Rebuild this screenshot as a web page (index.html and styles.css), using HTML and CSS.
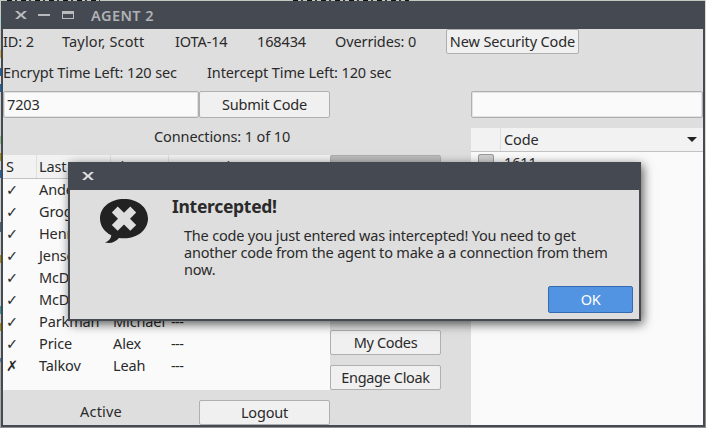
FILE: index.html
```
<!DOCTYPE html>
<html lang="en">
<head>
<meta charset="utf-8">
<title>AGENT 2</title>
<link rel="stylesheet" href="styles.css">
</head>
<body>
<div class="desktop">
  <div class="window">
    <header class="titlebar">
      <svg class="controls" width="64" height="12" viewBox="0 0 64 12">
        <path d="M1 2h3l3 2.7L10 2h3L8.700 6 13 10h-3L7 7.300 4 10H1l4.300-4z" fill="#b8babd"/>
        <path d="M24 5h12v2H24z" fill="#b8babd"/>
        <path d="M48 2h12v8H48zm1 3v4h10V5z" fill="#b8babd" fill-rule="evenodd"/>
      </svg>
      <span class="window-name">AGENT 2</span>
    </header>
    <main class="content">
      <div class="agent-row">
        <span class="id">ID: 2</span><span class="name">Taylor, Scott</span><span class="sector">IOTA-14</span><span class="serial">168434</span><span class="overrides">Overrides: 0</span><button class="btn new-code">New Security Code</button>
      </div>
      <div class="timers"><span class="encrypt">Encrypt Time Left: 120 sec</span><span class="intercept">Intercept Time Left: 120 sec</span></div>
      <div class="panels">
        <section class="left">
          <div class="entry-row"><div class="field">7203</div><button class="btn submit">Submit Code</button></div>
          <div class="connections"><span>Connections: 1 of 10</span></div>
          <div class="middle">
            <div class="agents">
              <div class="row head"><span>S</span><span>Last</span><span>First</span><span>Connection</span></div>
              <div class="row"><span>✓</span><span>Anderson</span><span></span><span></span></div>
              <div class="row"><span>✓</span><span>Grogan</span><span></span><span></span></div>
              <div class="row"><span>✓</span><span>Henry</span><span></span><span></span></div>
              <div class="row"><span>✓</span><span>Jensen</span><span></span><span></span></div>
              <div class="row"><span>✓</span><span>McD</span><span></span><span></span></div>
              <div class="row"><span>✓</span><span>McD</span><span></span><span></span></div>
              <div class="row"><span>✓</span><span>Parkman</span><span>Michael</span><span class="dashes">---</span></div>
              <div class="row"><span>✓</span><span>Price</span><span>Alex</span><span class="dashes">---</span></div>
              <div class="row"><span>✗</span><span>Talkov</span><span>Leah</span><span class="dashes">---</span></div>
            </div>
            <div class="actions">
              <div class="btn pressed"></div>
              <button class="btn my-codes">My Codes</button>
              <button class="btn cloak">Engage Cloak</button>
            </div>
          </div>
          <div class="footer"><span class="status">Active</span><button class="btn logout">Logout</button></div>
        </section>
        <section class="right">
          <div class="field"></div>
          <div class="codes">
            <div class="codes-head"><span class="check-col"></span><span class="code-col">Code</span><i class="sort"></i></div>
            <div class="codes-row"><i class="checkbox"></i><span>1611</span></div>
          </div>
        </section>
      </div>
    </main>
  </div>
  <div class="dialog">
    <header class="titlebar">
      <svg class="controls" width="14" height="12" viewBox="0 0 14 12">
        <path d="M1 2h3l3 2.7L10 2h3L8.700 6 13 10h-3L7 7.300 4 10H1l4.300-4z" fill="#dededf"/>
      </svg>
    </header>
    <div class="dialog-body">
      <svg class="bubble" width="48" height="45" viewBox="0 0 48 45">
        <path d="M24 0C37.500 0 48 8.200 48 19.500S37.500 39.300 24 39.300c-1.800 0-3.500-.1-5-.4C16 42.500 11 45 5 43.500c4-1.300 6-4 6.300-7.200C4.500 32.800 0 27 0 19.500 0 8.200 10.500 0 24 0z" fill="#222"/>
        <path d="M17.700 7.500 24 13.800l6.300-6.300 5.900 5.900-6.200 6.300 6.200 6.200-5.900 5.900-6.300-6.200-6.300 6.200-5.900-5.900 6.200-6.200-6.200-6.300z" fill="#dedede"/>
      </svg>
      <div class="message">
        <h1>Intercepted!</h1>
        <p>The code you just entered was intercepted! You need to get<br>another code from the agent to make a a connection from them<br>now.</p>
      </div>
      <button class="btn ok">OK</button>
    </div>
  </div>
</div>
</body>
</html>
```
FILE: styles.css
```
* { box-sizing: border-box; }
body { margin: 0; font: 14.5px/22px "Noto Sans", "DejaVu Sans", sans-serif; color: #2a2a2a; letter-spacing: -0.12px; }
.desktop {
  width: 706px; height: 428px; padding: 1px; overflow: hidden; position: relative;
  background:
    repeating-linear-gradient(90deg, #111 0 5px, #c3c8bf 5px 8px, #333 8px 10px, #c3c8bf 10px 14px) 7px 0 / 93px 1px no-repeat,
    repeating-linear-gradient(90deg, #111 0 5px, #c3c8bf 5px 8px, #333 8px 10px, #c3c8bf 10px 14px) 293px 0 / 116px 1px no-repeat,
    linear-gradient(#8f8f8f, #8f8f8f) 0 427px / 706px 1px no-repeat,
    linear-gradient(#d8d8d6 0 140px, #8f8f8f 360px) 705px 0 / 1px 428px no-repeat,
    linear-gradient(#c8c9c5 0 17px, #a9d3cf 17px 26px, #c8c9c5 26px 50px, #d5a642 50px 58px, #ddd 58px 68px, #1268b8 68px 76px, #ddd 76px 84px, #1268b8 84px 92px, #ccc 92px 136px, #8bbf83 136px 144px, #ccc 144px 153px, #a98c00 153px 161px, #ccc 161px 170px, #1268b8 170px 178px, #ccc 178px 222px, #4c6078 222px 232px, #ccc 232px 255px, #a98c00 255px 263px, #ccc 263px 306px, #36999b 306px 314px, #ccc 314px 323px, #a98c00 323px 331px, #ccc 331px 358px, #5479a8 358px 362px, #aaa 362px) 0 0 / 1px 428px no-repeat,
    #c3c8c0;
}
.window { width: 704px; height: 426px; border: 2px solid #454951; border-top: 0; background: #dedede; }
.titlebar { height: 28px; background: #454951; display: flex; align-items: center; }
.window .controls { margin-left: 11px; }
.window-name { margin-left: 13px; font-weight: 600; color: #b0b2b6; letter-spacing: 0.45px; }
.agent-row { height: 25px; display: flex; align-items: center; }
.agent-row span { white-space: nowrap; padding-bottom: 2px; }
.id { width: 59px; }
.name { width: 113px; }
.agent-row .name { letter-spacing: 0.15px; }
.sector { width: 82px; }
.serial { width: 78px; }
.overrides { width: 111px; }
.btn {
  font: inherit; letter-spacing: -0.2px; color: inherit; white-space: nowrap; padding: 0 0 2px;
  display: flex; align-items: center; justify-content: center; flex: none;
  height: 25px; border: 1px solid #afafaf; border-radius: 2px; background: #f0f0f0;
}
.new-code { width: 133px; letter-spacing: -0.12px; }
.my-codes, .cloak { letter-spacing: -0.35px; }
.timers { height: 37px; display: flex; align-items: center; padding-bottom: 2px; }
.encrypt { width: 204px; white-space: nowrap; }
.panels { display: flex; height: 334px; }
.left { width: 468px; }
.right { width: 232px; }
.field { height: 27px; padding: 1px 3px; background: #fafafa; border: 1px solid #afafaf; border-radius: 2px; box-shadow: inset 0 0 0 1px #e2e2e2; }
.entry-row { display: flex; }
.entry-row .field { width: 196px; }
.submit { width: 131px; height: 27px; }
.connections { height: 37px; padding: 7px 0 0 151px; }
.middle { display: flex; height: 235px; }
.agents { width: 327px; background: #fafafa; }
.row { display: grid; grid-template-columns: 33px 74px 58px 1fr; height: 22px; line-height: 20px; }
.row span { padding-left: 3px; white-space: nowrap; overflow: hidden; }
.head { height: 24px; background: #f2f2f2; border-bottom: 1px solid #c2c2c2; line-height: 22px; }
.head span + span { border-left: 1px solid #dedede; padding-left: 2px; }
.row .dashes { letter-spacing: -0.6px; }
.actions { width: 111px; display: flex; flex-direction: column; gap: 10px; }
.pressed { height: 165px; background: #bcbcbc; width: 100%; }
.footer { display: flex; padding-top: 10px; }
.status { width: 196px; text-align: center; line-height: 23px; letter-spacing: 0.2px; }
.logout { width: 131px; }
.codes { margin-top: 10px; height: 297px; background: #fafafa; }
.codes-head { display: flex; height: 24px; background: #f2f2f2; border-bottom: 1px solid #c2c2c2; align-items: center; }
.check-col { width: 30px; height: 23px; border-right: 1px solid #dedede; }
.code-col { flex: 1; padding: 0 0 2px 3px; }
.sort { border: 5px solid transparent; border-top-color: #222; border-bottom: 0; margin-right: 6px; }
.codes-row { display: flex; height: 22px; padding-left: 7px; line-height: 21px; }
.checkbox { width: 16px; height: 16px; margin: 2px 10px 0 0; border: 1px solid #9a9a9a; border-radius: 2px; background: #d0d0d0; }
.dialog {
  position: absolute; left: 68px; top: 162px; width: 573px; height: 159px;
  border: 2px solid #454951; border-top: 0; background: #dedede;
  box-shadow: 2px 3px 10px rgba(0,0,0,.65);
}
.dialog .controls { margin-left: 11px; }
.dialog-body { display: grid; grid-template-columns: 48px 1fr 85px; grid-template-rows: 96px 27px; padding: 0 6px 0 30px; }
.bubble { margin-top: 9px; }
.message { grid-column: 2 / 4; padding-left: 24px; }
.message h1 { margin: 4px 0 9px; font-size: 17.5px; line-height: 24px; font-weight: 700; letter-spacing: -0.3px; }
.message p { margin: 0 0 0 12px; line-height: 17px; white-space: nowrap; letter-spacing: -0.2px; }
.ok { grid-column: 3; width: 85px; height: 27px; background: #5294e2; border-color: #346bb0; color: #fff; letter-spacing: -0.4px; }
```
